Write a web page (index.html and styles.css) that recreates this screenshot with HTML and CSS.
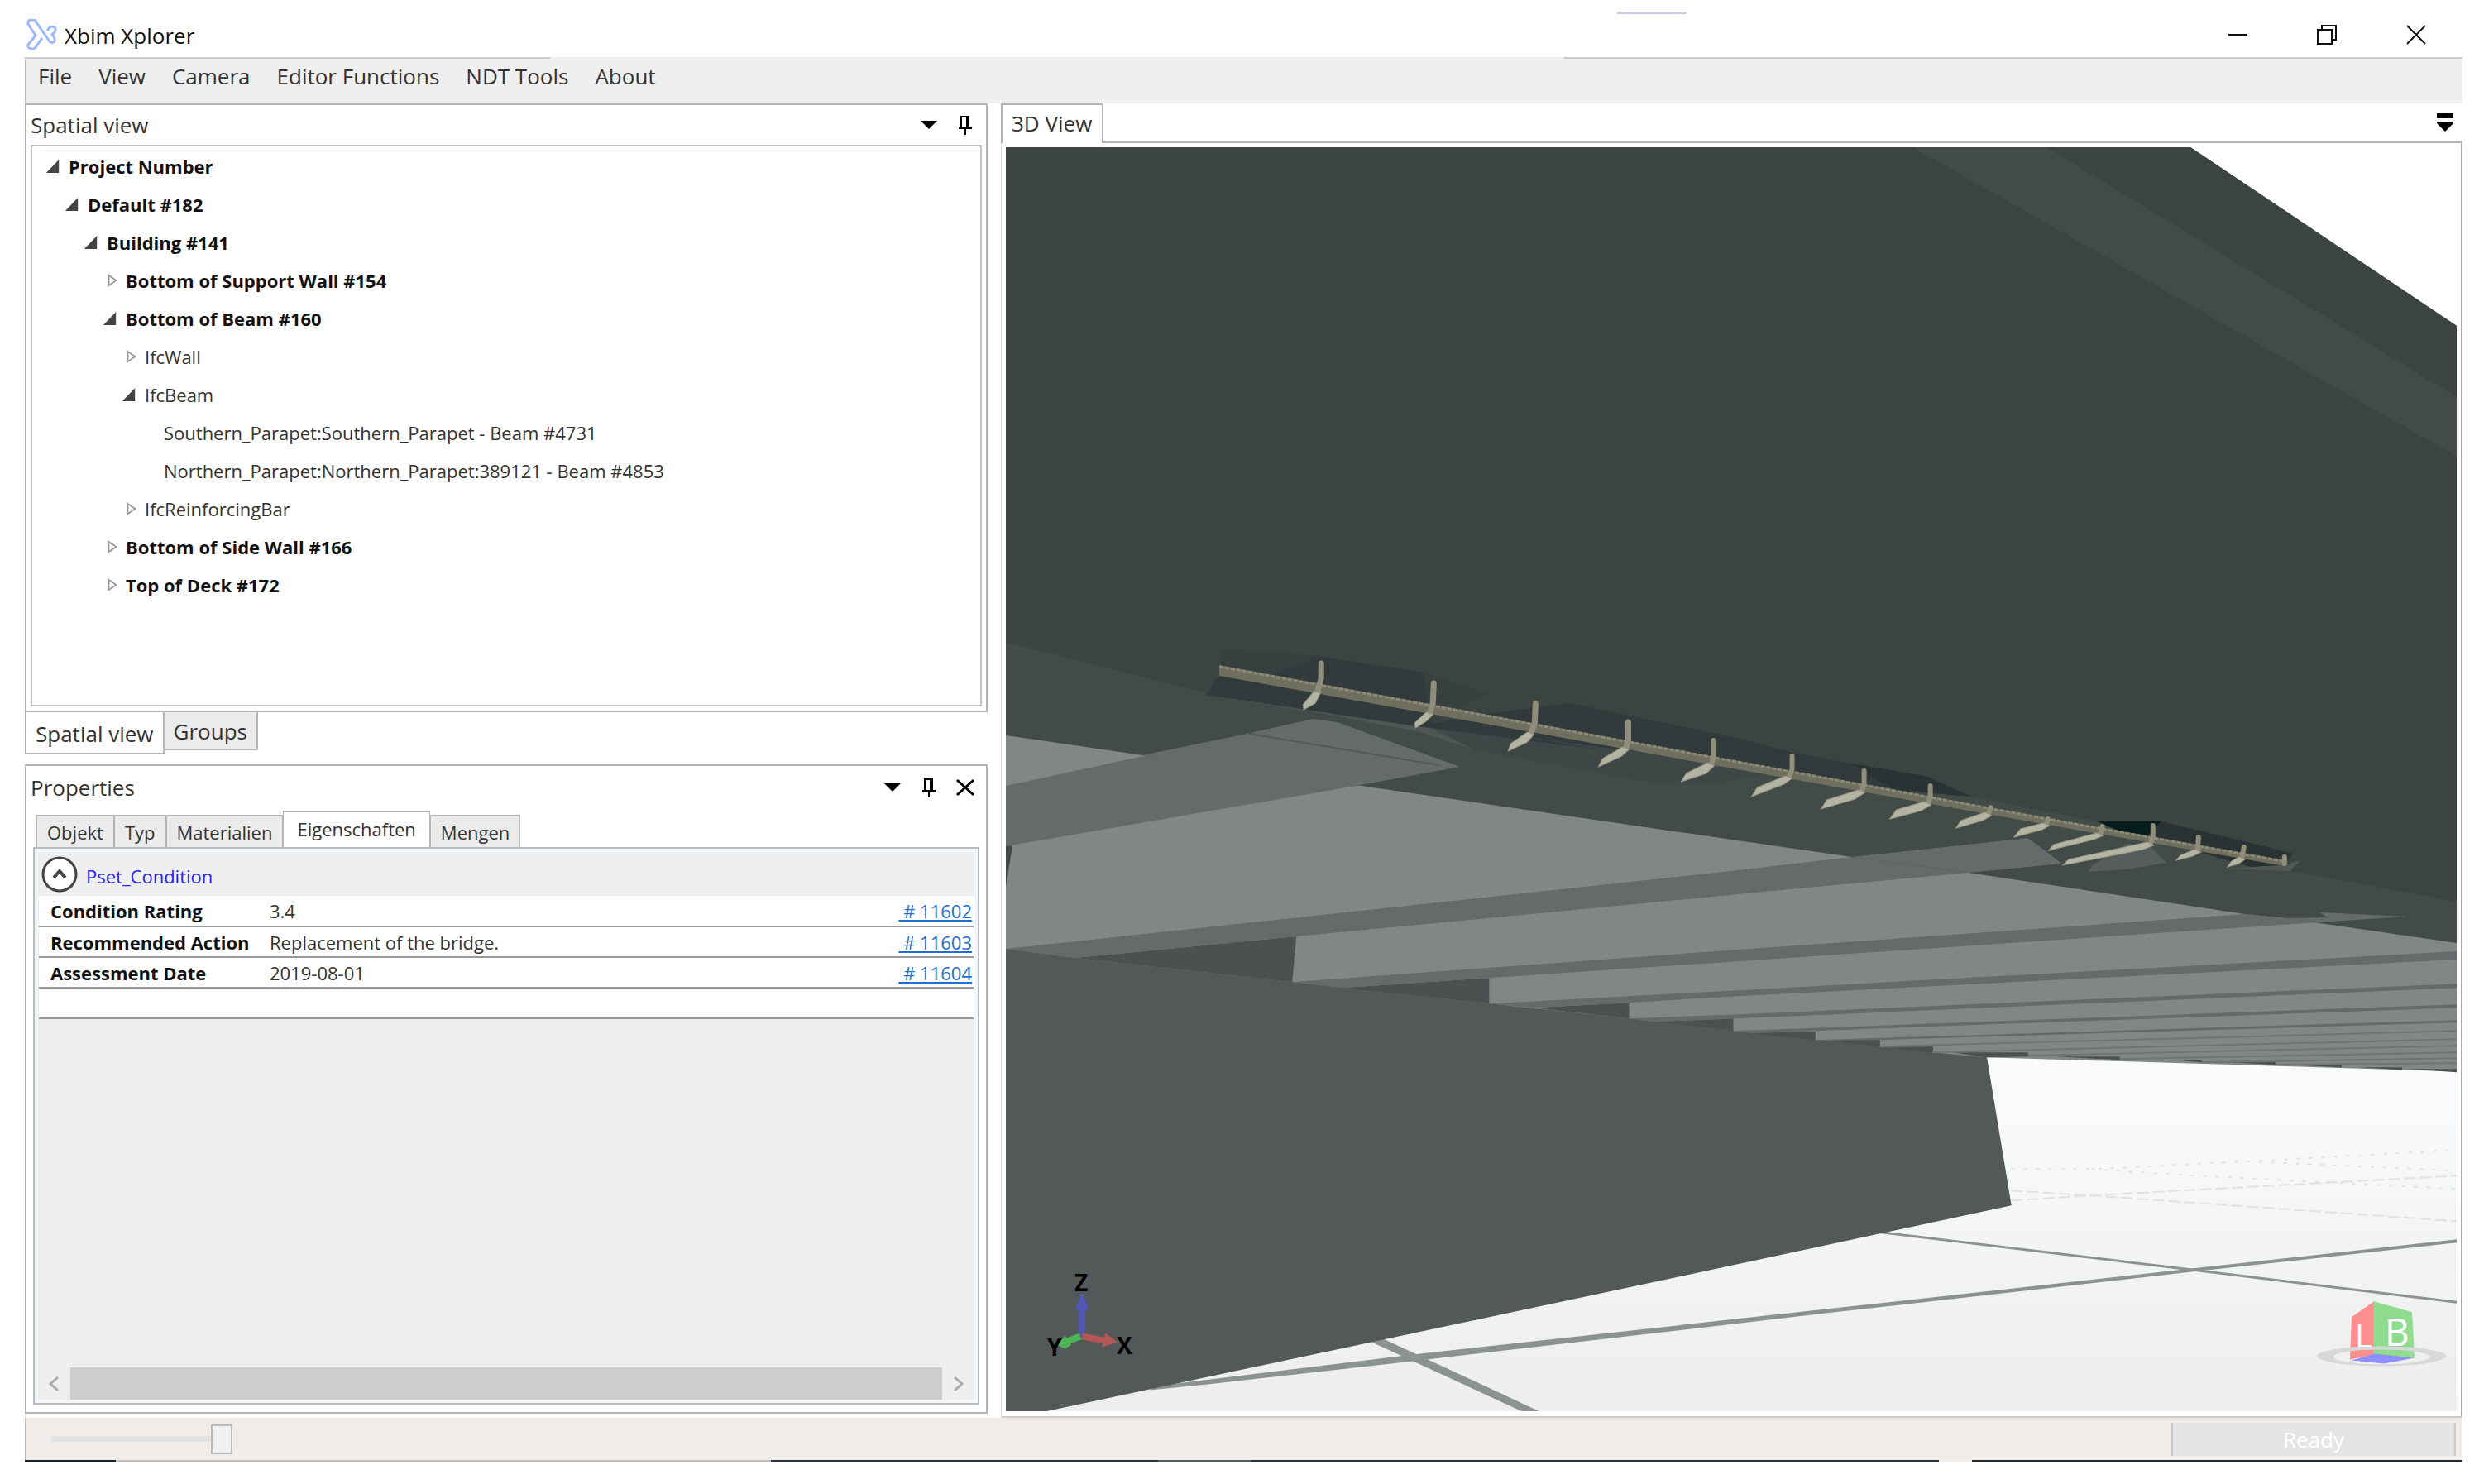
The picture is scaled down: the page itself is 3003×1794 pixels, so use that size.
FILE: index.html
```html
<!DOCTYPE html>
<html lang="en">
<head>
<meta charset="utf-8">
<title>Xbim Xplorer</title>
<link rel="stylesheet" href="styles.css">
</head>
<body>
<div class="window">
  <header class="titlebar">
    <svg class="app-icon" viewBox="0 0 38 38" aria-hidden="true"><path d="M19 23L11 34q-1 2-4 2-6 0-5-5L11 20 2 6Q1 1 6 1h3q2 0 3 3L28 27q3 3 6 0 1-4-3-8 5-4 4-8-3-3-7-1l-3 4"/></svg>
    <h1 class="app-title">Xbim Xplorer</h1>
    <span class="top-mark"></span>
    <div class="window-controls">
      <button type="button" aria-label="Minimize"><svg viewBox="0 0 24 24"><path d="M1 12h22"/></svg></button>
      <button type="button" aria-label="Restore"><svg viewBox="0 0 24 24"><path d="M1 6h17v17H1zM6 6V1h17v17h-5"/></svg></button>
      <button type="button" aria-label="Close"><svg viewBox="0 0 24 24"><path d="M1 1l22 22M23 1L1 23"/></svg></button>
    </div>
  </header>

  <nav class="menubar" aria-label="Main">
    <button type="button">File</button>
    <button type="button">View</button>
    <button type="button">Camera</button>
    <button type="button">Editor Functions</button>
    <button type="button">NDT Tools</button>
    <button type="button">About</button>
  </nav>

  <main class="workspace">
    <div class="sidebar">
      <section class="pane spatial" aria-label="Spatial view">
        <div class="pane-head">
          <h2>Spatial view</h2>
          <button type="button" aria-label="Options"><svg viewBox="0 0 24 24"><path class="solid" d="M2 7h20l-10 10z"/></svg></button>
          <button type="button" aria-label="Pin"><svg viewBox="0 0 24 24"><path d="M7 16V2h9v14M4 16h16M12 16v8"/><path class="thick" d="M15 2v14"/></svg></button>
        </div>
        <ul class="tree">
          <li class="lv0 open strong">Project Number</li>
          <li class="lv1 open strong">Default #182</li>
          <li class="lv2 open strong">Building #141</li>
          <li class="lv3 shut strong">Bottom of Support Wall #154</li>
          <li class="lv3 open strong">Bottom of Beam #160</li>
          <li class="lv4 shut">IfcWall</li>
          <li class="lv4 open">IfcBeam</li>
          <li class="lv5">Southern_Parapet:Southern_Parapet - Beam #4731</li>
          <li class="lv5">Northern_Parapet:Northern_Parapet:389121 - Beam #4853</li>
          <li class="lv4 shut">IfcReinforcingBar</li>
          <li class="lv3 shut strong">Bottom of Side Wall #166</li>
          <li class="lv3 shut strong">Top of Deck #172</li>
        </ul>
      </section>
      <div class="dock-tabs">
        <button type="button" class="current">Spatial view</button>
        <button type="button">Groups</button>
      </div>

      <section class="pane properties" aria-label="Properties">
        <div class="pane-head">
          <h2>Properties</h2>
          <button type="button" aria-label="Options"><svg viewBox="0 0 24 24"><path class="solid" d="M2 7h20l-10 10z"/></svg></button>
          <button type="button" aria-label="Pin"><svg viewBox="0 0 24 24"><path d="M7 16V2h9v14M4 16h16M12 16v8"/><path class="thick" d="M15 2v14"/></svg></button>
          <button type="button" aria-label="Close"><svg viewBox="0 0 24 24"><path class="cross" d="M2 3l20 18M22 3L2 21"/></svg></button>
        </div>
        <div class="prop-tabs">
          <button type="button">Objekt</button>
          <button type="button">Typ</button>
          <button type="button">Materialien</button>
          <button type="button" class="current">Eigenschaften</button>
          <button type="button">Mengen</button>
        </div>
        <div class="prop-body">
          <div class="group-head">
            <button type="button" aria-label="Collapse group"><svg viewBox="0 0 44 44"><circle cx="22" cy="22" r="20"/><path class="chevron" d="M15 26l7-8 7 8"/></svg></button>
            <span>Pset_Condition</span>
          </div>
          <table class="props">
            <tr><th scope="row">Condition Rating</th><td>3.4</td><td class="ref"><a href="#11602">&nbsp;# 11602</a></td></tr>
            <tr><th scope="row">Recommended Action</th><td>Replacement of the bridge.</td><td class="ref"><a href="#11603">&nbsp;# 11603</a></td></tr>
            <tr><th scope="row">Assessment Date</th><td>2019-08-01</td><td class="ref"><a href="#11604">&nbsp;# 11604</a></td></tr>
            <tr><td colspan="3"></td></tr>
          </table>
          <div class="scroller">
            <button type="button" aria-label="Scroll left"><svg viewBox="0 0 24 24"><path d="M16 4l-9 8 9 8"/></svg></button>
            <span class="scroll-thumb"></span>
            <button type="button" aria-label="Scroll right"><svg viewBox="0 0 24 24"><path d="M8 4l9 8-9 8"/></svg></button>
          </div>
        </div>
      </section>
    </div>

    <section class="document" aria-label="3D View">
      <div class="doc-tabs">
        <button type="button" class="doc-tab">3D View</button>
        <button type="button" class="doc-menu" aria-label="Open documents"><svg viewBox="0 0 24 24"><path class="solid" d="M2 1h20v6H2zM2 11h20v2L12 23 2 13z"/></svg></button>
      </div>
      <div class="doc-body">
        <svg class="scene" viewBox="1216 178 1753 1528" preserveAspectRatio="xMidYMid slice" role="img" aria-label="Bridge model seen from below">
          <defs>
            <linearGradient id="ground" x1="0" y1="0" x2="0" y2="1"><stop offset="0" stop-color="#fdfdff"/><stop offset=".35" stop-color="#f8f9fa"/><stop offset="1" stop-color="#ededed"/></linearGradient>
          </defs>
          <rect x="1216" y="178" width="1753" height="1000" fill="#fff"/>
          <rect x="1216" y="1178" width="1753" height="528" fill="url(#ground)"/>
          <g fill="none" stroke="#dfe2e3" stroke-width="2">
            <path stroke-dasharray="14 5" d="M2431 1439L2528 1445 2969 1476M2431 1451L2528 1445 2671 1437 2969 1421"/>
            <path stroke-dasharray="4 11" d="M2431 1413H2528L2712 1404 2969 1390M2528 1413L2635 1420 2969 1437M2700 1403L2969 1415"/>
          </g>
          <path fill="#8c9291" d="M1398 1675L1708 1637 2200 1583 2651 1533 2969 1498V1502L2651 1537 2200 1588 1708 1645 1460 1673 1390 1680zM1658 1622L1672 1618 1861 1706H1840z"/>
          <path fill="none" stroke="#8c9291" stroke-width="3" d="M2270 1489L2651 1535 2969 1574"/>
          <!-- abutment wall -->
          <path fill="#535958" d="M1216 1140L2400 1270 2431 1457 2100 1528 1263 1706H1216z"/>
          <!-- deck underside -->
          <path fill="#828786" d="M1216 880H2969V1295L2400 1278 2336 1272V1265H2272V1257H2194V1246H2095L1969 1231 1800 1213 1562 1187 1300 1158 1216 1147z"/>
          <path fill="#4b5150" d="M1300 1158L1567 1132 1562 1187zM1622 1194L1800 1182V1213zM1852 1218L1969 1212V1231zM2001 1235L2095 1231V1246zM2120 1249L2194 1246V1257zM2215 1258L2272 1256V1265zM2290 1267L2336 1265V1273zM2360 1272H2451V1277L2400 1278zM2484 1277H2562V1281zM2625 1281H2661V1284zM2680 1283H2750V1287zM2768 1287H2830V1290zM2850 1290H2903V1293zM2910 1292H2969V1296z"/>
          <g fill="#656b6a">
            <path d="M1216 950L1507 887 1587 869 1616 873 1765 927 1639 950 1216 1023z"/>
            <path d="M1216 1147L2100 1052 2238 1036 2451 1013 2492 1044 2379 1055 2100 1081 1567 1132 1300 1158z"/>
            <path d="M1562 1187L2100 1148 2713 1105 2800 1115 2100 1162 1800 1182 1622 1194z"/>
            <path d="M1800 1213L2100 1197 2969 1150V1160L2100 1204 1969 1212 1852 1218z"/>
            <path d="M1969 1231L2100 1226 2969 1189V1194L2100 1231 2001 1235z"/>
            <path d="M2095 1246L2969 1214V1218L2194 1246 2120 1249z"/>
            <path d="M2194 1257L2969 1233V1236L2272 1257z"/>
          </g>
          <path fill="none" stroke="#6f7574" stroke-width="2" d="M2272 1265L2969 1246M2336 1272L2969 1256M2451 1276L2969 1264M2562 1280L2969 1272M2661 1284L2969 1279M2750 1287L2969 1285"/>
          <path fill="#434b49" d="M1216 1023L1224 1022 1216 1072z"/>
          <!-- girder flange and web -->
          <path fill="#434b49" d="M1216 770L1460 800H2760L2969 1080V1140L2762 1110 2713 1105 2379 1055 2238 1036 2100 1016 1639 949 1381 913 1216 889z"/>
          <path fill="#656b6a" d="M1381 913L1507 887 1587 869 1616 873 1765 927 1639 950zM2238 1036L2451 1013 2492 1044 2379 1055zM2713 1105L2762 1110 2812 1109 2804 1103 2909 1108 2800 1115z"/>
          <path fill="#3c4442" d="M1216 178H2647L2969 394V1090L2771 1053 2612 995 2535 993 2382 963 2100 900 1940 880 1734 875 1458 838 1216 776z"/>
          <path fill="#434b49" d="M2311 178H2473L2969 480V552z"/>
          <path fill="none" stroke="#545a59" stroke-width="2" d="M1510 887L1740 925"/>
          <!-- spalled concrete -->
          <path fill="#3f4746" d="M1728 875L1940 890 2240 940 2420 985 2480 1000 2440 1005 2100 946 1990 945 1783 907z"/>
          <path fill="#434b49" d="M2080 946L2160 930 2300 958 2440 985 2560 1008 2600 1020 2700 1048 2640 1060 2500 1030 2451 1013 2400 1010z"/>
          <path fill="#38403f" d="M1476 783L1596 793 1720 813 1799 838 1730 873 1458 840 1474 818z"/>
          <path fill="#323a3b" d="M1458 840L1474 817 1530 818 1596 794 1720 813 1730 873 1940 907 1728 880zM1797 863L1896 850 2100 892 2166 910 2238 923 2330 939 2382 963 2300 955 2100 922 1940 904 1728 875z"/>
          <path fill="#2a3233" d="M2238 923L2330 939 2382 963 2290 955zM2612 993L2716 1018 2771 1032 2759 1046 2720 1048 2595 1012z"/>
          <path fill="#061d1e" d="M2535 993L2612 993 2595 1011 2560 1004z"/>
          <path fill="#4f5655" d="M1458 840L1676 873 1728 880 1783 907 1717 885 1602 863zM2687 1050L2759 1046 2780 1040 2768 1053z"/>
          <path fill="#565d5c" d="M2523 1054L2530 1045 2572 1020 2601 1025 2618 1043 2570 1051z"/>
          <!-- reinforcement -->
          <path fill="#6f6f60" d="M1474 804L2100 920 2469 988 2761 1040V1047L2469 996 2100 930 1474 817z"/>
          <path fill="none" stroke="#8b8a76" stroke-width="3" stroke-dasharray="5 2" d="M1474 806L2100 921 2469 989 2759 1041"/>
          <g fill="none" stroke="#8f8e7b" stroke-width="7" stroke-linecap="round" stroke-linejoin="round">
            <path d="M1597 802V820L1592 838M1733 826L1732 850 1728 863M1856 851L1855 875 1850 887M1968 873V895L1965 905"/>
            <path stroke-width="6" d="M2071 895V915L2068 925M2166 914V930L2162 940M2253 932V948L2250 957M2333 950V964L2330 972M2406 976L2403 985M2475 990L2473 997M2541 999L2538 1009M2602 998V1012L2599 1020M2657 1012L2656 1029M2712 1024L2709 1038M2761 1036V1044"/>
          </g>
          <g fill="#b4b4a2" stroke="#9a9986" stroke-width="1">
            <path d="M1588 836L1596 838 1590 850 1576 858 1575 852zM1724 861L1732 864 1724 872 1711 880 1710 874zM1846 885L1854 888 1846 897 1823 908 1826 899zM1961 903L1969 906 1960 914 1932 927 1937 917zM2064 922L2072 926 2062 935 2032 945 2038 935zM2158 938L2166 941 2156 948 2117 963 2124 952zM2246 955L2254 958 2242 966 2201 978 2208 967zM2326 969L2334 973 2322 980 2284 990 2292 979zM2399 982L2407 986 2396 992 2364 1001 2370 992zM2469 995L2477 998 2468 1003 2434 1012 2442 1002zM2534 1007L2542 1010 2530 1015 2476 1028 2482 1021zM2595 1018L2603 1022 2590 1027 2493 1046 2500 1039zM2652 1027L2660 1030 2650 1035 2630 1040 2635 1034zM2706 1036L2713 1039 2706 1044 2692 1048 2697 1041z"/>
          </g>
          <!-- axis triad -->
          <g class="triad">
            <path stroke="#5157b5" stroke-width="8" d="M1308 1615V1582"/><path fill="#5157b5" d="M1300 1582L1308 1562 1316 1582 1308 1587z"/>
            <path stroke="#b55757" stroke-width="8" d="M1308 1615L1334 1620"/><path fill="#b55757" d="M1336 1611L1351 1622 1332 1628z"/>
            <path stroke="#4db557" stroke-width="8" d="M1306 1615L1290 1621"/><path fill="#4db557" d="M1287 1614L1295 1625 1288 1630 1279 1626z"/>
            <text x="1299" y="1561">Z</text><text x="1266" y="1639">Y</text><text x="1350" y="1637">X</text>
          </g>
          <!-- view cube -->
          <g class="cube">
            <path fill="#ff8f8f" d="M2869 1573L2842 1592 2840 1643 2869 1637z"/>
            <path fill="#8fdc8f" d="M2869 1573L2915 1586 2918 1641 2869 1637z"/>
            <text x="2846" y="1629" font-size="40">L</text><text x="2882" y="1627" font-size="46">B</text>
            <path fill="#d6d9d8" fill-rule="evenodd" d="M2800 1639a78 12 0 0 1 156 0a78 12 0 0 1-156 0zM2820 1640a58 9 0 0 0 116 0a58 9 0 0 0-116 0z"/>
            <path fill="#8f8fff" d="M2842 1644L2869 1636 2918 1641 2881 1648z"/>
          </g>
        </svg>
      </div>
    </section>
  </main>

  <footer class="statusbar">
    <input type="range" min="0" max="100" value="100" aria-label="Zoom">
    <output class="ready">Ready</output>
  </footer>
  <div class="edge"></div>
</div>
</body>
</html>
```
FILE: styles.css
```css
* { box-sizing: border-box; }
body {
  margin: 0;
  background: #fff;
  color: #333;
  font-family: "Open Sans", "Noto Sans", sans-serif;
  font-size: 26px;
}
button {
  margin: 0;
  padding: 0;
  border: 0;
  background: none;
  color: inherit;
  font: inherit;
}
h1, h2 { margin: 0; font-size: 26px; font-weight: 400; }
svg { display: block; }

.window {
  display: flex;
  flex-direction: column;
  height: 100vh;
  padding: 0 26px 26px 30px;
}

/* title bar */
.titlebar {
  display: grid;
  grid-template-columns: auto 1fr auto auto;
  align-items: center;
  flex: none;
  height: 69px;
  padding: 14px 44px 0 2px;
}
.app-icon { width: 38px; height: 38px; fill: none; stroke: #9db9fb; stroke-width: 3; }
.app-title { padding: 2px 0 0 8px; color: #111; }
.top-mark { align-self: start; width: 84px; height: 3px; margin-right: 654px; background: #c8cce0; }
.window-controls { display: flex; gap: 84px; }
.window-controls svg { width: 24px; height: 24px; fill: none; stroke: #111; stroke-width: 2; }

/* menu */
.menubar {
  display: flex;
  flex: none;
  gap: 32px;
  height: 56px;
  padding: 0 15px 10px;
  border-left: 1px solid #bbb;
  background:
    linear-gradient(#ccc, #ccc) 0 0 / 634px 2px no-repeat,
    linear-gradient(#ccc, #ccc) 100% 0 / 1087px 2px no-repeat,
    #efefef;
}

/* docking layout */
.workspace {
  display: grid;
  grid-template-columns: minmax(0, 1164fr) minmax(0, 1767fr);
  gap: 16px;
  flex: 1;
  min-height: 0;
}
.sidebar { display: flex; flex-direction: column; min-height: 0; padding-bottom: 5px; }
.pane { display: flex; flex-direction: column; border: 2px solid #b4b4b4; }
.spatial { flex: 738 1 0; min-height: 0; padding: 0 5px 5px; }
.properties { flex: 783 1 0; min-height: 0; margin-top: 12px; padding: 0 8px 9px; }
.pane-head { display: flex; align-items: center; gap: 20px; flex: none; height: 48px; padding-right: 8px; }
.properties .pane-head { height: 52px; padding-right: 5px; }
.pane-head h2 { margin-right: auto; }
.properties h2 { margin-left: -3px; }
.pane-head svg { width: 24px; height: 24px; fill: none; stroke: #000; stroke-width: 2; }
svg .solid { fill: #000; stroke: none; }
svg .thick { stroke-width: 4; }
svg .cross { stroke-width: 3; }

.tree {
  flex: 1;
  min-height: 0;
  margin: 0;
  padding: 1px 0 0 16px;
  border: 2px solid #bfc3c9;
  list-style: none;
  font-size: 22px;
  line-height: 46px;
}
.tree li { display: flex; align-items: center; gap: 10px; height: 46px; white-space: nowrap; }
.tree li::before { content: ""; flex: none; width: 18px; height: 16px; }
.tree .strong { color: #111; font-weight: 700; }
.tree .open::before { background: #444; clip-path: polygon(90% 0, 90% 100%, 5% 100%); }
.tree .shut::before { background: #999; clip-path: polygon(35% 0, 100% 50%, 35% 100%, 35% 18%, 47% 22%, 47% 78%, 82% 50%, 35% 14%); }
.lv1 { padding-left: 23px; }
.lv2 { padding-left: 46px; }
.lv3 { padding-left: 69px; }
.lv4 { padding-left: 92px; }
.lv5 { padding-left: 115px; }

.dock-tabs { display: flex; align-items: flex-start; flex: none; height: 51px; }
.dock-tabs button { height: 46px; padding: 2px 11px 0; border: 2px solid #b4b4b4; border-top: 0; border-left: 0; background: #ebebeb; }
.dock-tabs .current { height: 51px; border-left: 2px solid #b4b4b4; background: #fff; }

.prop-tabs { display: flex; align-items: flex-end; flex: none; height: 46px; padding-left: 4px; font-size: 22px; }
.prop-tabs button { height: 39px; padding: 0 12px; border: 2px solid #b4b4b4; border-bottom: 0; border-left-width: 1px; border-right-width: 1px; background: #ebebeb; }
.prop-tabs .current { height: 46px; margin-bottom: -2px; padding: 0 16px 4px; background: #fff; }
.prop-body {
  display: flex;
  flex-direction: column;
  flex: 1;
  min-height: 0;
  border: 2px solid #b8bcc2;
  padding: 4px 5px;
  background: #efefef;
  box-shadow: inset 0 0 0 4px #f4f7fa;
  font-size: 22px;
}
.group-head { display: flex; align-items: center; gap: 10px; height: 53px; padding-left: 3px; color: #2a1ff0; }
.group-head span { padding-top: 4px; }
.group-head svg { width: 44px; height: 44px; fill: #fff; stroke: #444; stroke-width: 3; }
.group-head .chevron { stroke-width: 4; }
.props { width: 100%; border-collapse: collapse; background: #fff; }
.props tr { height: 37px; border-bottom: 2px solid #999; }
.props th, .props td { padding: 0; text-align: left; line-height: 30px; white-space: nowrap; }
.props th { width: 279px; padding-left: 14px; color: #111; font-weight: 700; }
.props .ref { padding-right: 2px; text-align: right; }
.props a { color: #1f6fd0; }
.scroller { display: flex; align-items: center; height: 39px; margin-top: auto; }
.scroller button { padding: 0 7px; }
.scroller svg { width: 24px; height: 24px; fill: none; stroke: #aaa; stroke-width: 3; }
.scroll-thumb { flex: 1; height: 39px; background: #cdcdcd; }

/* document area */
.document { display: flex; flex-direction: column; min-height: 0; }
.doc-tabs { display: flex; flex: none; height: 48px; }
.doc-tab { height: 48px; padding: 0 12px 2px 11px; border: 2px solid #b4b4b4; border-bottom: 0; border-right-width: 1px; }
.doc-menu { display: flex; align-items: center; justify-content: flex-end; flex: 1; padding-right: 9px; border-bottom: 2px solid #b4b4b4; }
.doc-menu svg { width: 24px; height: 24px; }
.doc-body { flex: 1; min-height: 0; padding: 5px 5px 6px; border: 1px solid #dfe2e3; border-right: 2px solid #aaa; border-top: 0; border-bottom: 2px solid #ccc; }
.scene { width: 100%; height: 100%; }
.triad text { fill: #000; font-size: 28px; font-weight: 700; }
.cube text { fill: #fff; }

/* status bar */
.statusbar { display: flex; align-items: center; justify-content: space-between; flex: none; height: 51px; padding: 0 8px 0 31px; border-left: 1px solid #bbb; background: #f0ecea; }
.statusbar input { width: 219px; height: 36px; margin: 0; appearance: none; background: linear-gradient(#e2e4e3, #e2e4e3) 0 50% / 100% 7px no-repeat; }
.statusbar input::-webkit-slider-thumb { width: 26px; height: 36px; appearance: none; border: 2px solid #bbb; background: #f0f0f0; }
.ready { width: 344px; border: 2px solid #ccc; border-top: 0; border-bottom: 0; background: #e5e5e5; color: #fff; line-height: 40px; text-align: center; }
.edge {
  flex: none;
  height: 3px;
  background: linear-gradient(90deg, #1b1e20 110px, #bfbfbf 110px 902px, #2b3234 902px 1370px, #555c5b 1370px 1482px, #2b3234 1482px 2314px, #f0efee 2314px 2354px, #22282b 2354px);
}
```
